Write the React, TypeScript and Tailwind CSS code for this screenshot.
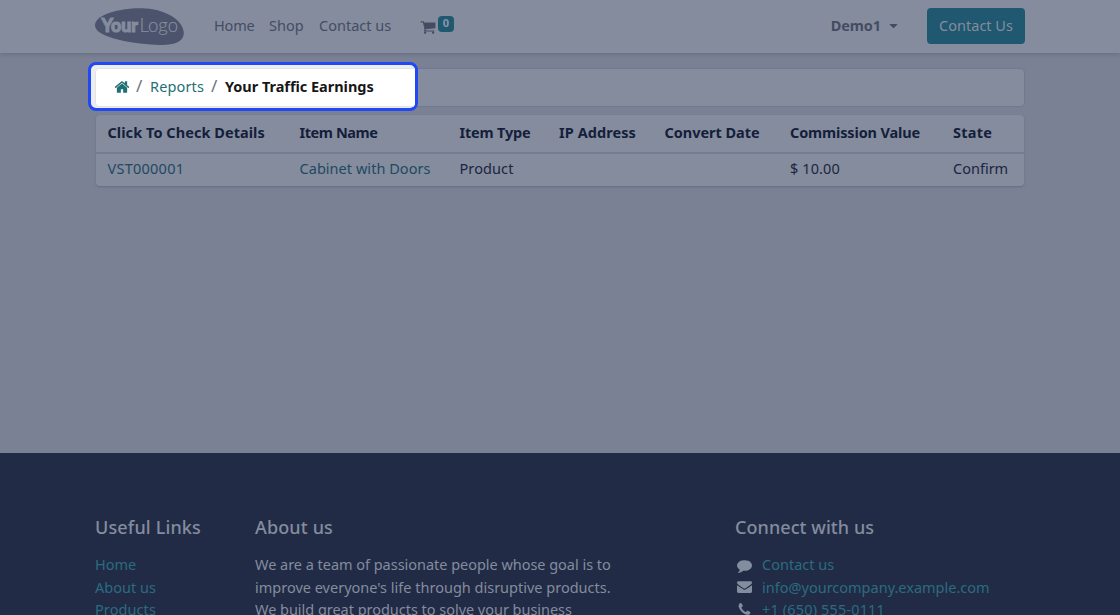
import { FaCaretDown } from 'react-icons/fa';

const ICONS = {
  home: 'M1472 992v480q0 26-19 45t-45 19h-384v-384h-256v384h-384q-26 0-45-19t-19-45v-480q0-1 .5-3t.5-3l575-474 575 474q1 2 1 6zm223-69l-62 74q-8 9-21 11h-3q-13 0-21-7l-692-577-692 577q-12 8-24 7-13-2-21-11l-62-74q-8-10-7-23.5t11-21.5l719-599q32-26 76-26t76 26l244 204v-195q0-14 9-23t23-9h192q14 0 23 9t9 23v408l219 182q10 8 11 21.5t-7 23.5z',
  cart: 'M704 1536q0 52-38 90t-90 38-90-38-38-90 38-90 90-38 90 38 38 90zm896 0q0 52-38 90t-90 38-90-38-38-90 38-90 90-38 90 38 38 90zm128-1088v512q0 24-16.5 42.5t-40.5 21.5l-1044 122q13 60 13 70 0 16-24 64h920q26 0 45 19t19 45-19 45-45 19h-1024q-26 0-45-19t-19-45q0-11 8-31.5t16-36 21.5-40 15.5-29.5l-177-823h-204q-26 0-45-19t-19-45 19-45 45-19h256q16 0 28.5 6.5t19.5 15.5 13 24.5 8 26 5.5 29.5 4.5 26h1201q26 0 45 19t19 45z',
  comment: 'M1792 896q0 174-120 321.5t-326 233-450 85.5q-70 0-145-8-198 175-460 242-49 14-114 22-17 2-30.5-9t-17.5-29v-1q-3-4-.5-12t2-10 4.5-9.5l6-9 7-8.5 8-9q7-8 31-34.5t34.5-38 31-39.5 32.5-51 27-59 26-76q-157-89-247.5-220t-90.5-281q0-130 71-248.5t191-204.5 286-136.5 348-50.5q244 0 450 85.5t326 233 120 321.5z',
  envelope: 'M1792 710v794q0 66-47 113t-113 47h-1472q-66 0-113-47t-47-113v-794q44 49 101 87 362 246 497 345 57 42 92.5 65.5t94.5 48 110 24.5h2q51 0 110-24.5t94.5-48 92.5-65.5q170-123 498-345 57-39 100-87zm0-294q0 79-49 151t-122 123q-376 261-468 325-10 7-42.5 30.5t-54 38-52 32.5-57.5 27-50 9h-2q-23 0-50-9t-57.5-27-52-32.5-54-38-42.5-30.5q-91-64-262-182.5t-205-142.5q-62-42-117-115.5t-55-136.5q0-78 41.5-130t118.5-52h1472q65 0 112.500 47t47.500 113z',
  phone: 'M1600 1240q0 27-10 70.5t-21 68.5q-21 50-122 106-94 51-186 51-27 0-53-3.5t-57.5-12.5-47-14.5-55.5-20.5-49-18q-98-35-175-83-127-79-264-216t-216-264q-48-77-83-175-3-9-18-49t-20.5-55.5-14.5-47-12.5-57.5-3.5-53q0-92 51-186 56-101 106-122 25-11 68.5-21t70.5-10q14 0 21 3 18 6 53 76 11 19 30 54t35 63.5 31 53.5q3 4 17.5 25t21.5 35.5 7 28.500q0 20-28.5 50t-62 55-62 53-28.5 46q0 9 5 22.5t8.5 20.5 14 24 11.5 19q76 137 174 235t235 174q2 1 19 11.5t24 14 20.5 8.5 22.5 5q18 0 46-28.5t53-62 55-62 50-28.5q14 0 28.5 7t35.5 21.5 25 17.5q25 15 53.5 31t63.5 35 54 30q70 35 76 53 3 7 3 21z',
};

function Icon({ name, className }: { name: keyof typeof ICONS; className: string }) {
  return (
    <svg viewBox="0 0 1792 1792" fill="currentColor" className={className}>
      <path d={ICONS[name]} />
    </svg>
  );
}

function Logo() {
  return (
    <svg className="mt-[2px] block h-[38px] w-[90px]" viewBox="0 0 90 38">
      <path d="M0 17.5C0 7 22 .3 46 .2C69 0 88.800 12 88.800 25C88.800 34 79 37.300 65 37C42 36.500 0 30 0 17.500Z" fill="#4b546c" />
      <path d="M3.500 9.300h5l2 3z" fill="#4b546c" />
      <text x="6.500" y="23.800" fontFamily="Lato, sans-serif" fontWeight="900" fontSize="18.500" textLength="36.500" lengthAdjust="spacingAndGlyphs" fill="#848c9e" stroke="#848c9e" strokeWidth="1.1">
        Your
      </text>
      <text x="44.500" y="23.800" fontFamily="Lato, sans-serif" fontWeight="300" fontSize="19" textLength="38.500" lengthAdjust="spacingAndGlyphs" fill="#848c9e" stroke="#848c9e" strokeWidth=".2">
        Logo
      </text>
    </svg>
  );
}

function Header() {
  return (
    <header className="h-[53px] bg-[#848c9e] shadow-[0_2px_4px_rgba(45,58,90,0.22)]">
      <div className="mx-auto flex h-[51px] w-[930px] items-center text-[#444c64]">
        <Logo />
        <nav className="ml-[29px] flex items-center">
          <a className="w-[55px] tracking-[-0.15px]">Home</a>
          <a className="w-[50px]">Shop</a>
          <a className="w-[101px]">Contact us</a>
          <a className="flex items-center">
            <Icon name="cart" className="mt-[2px] size-[16px]" />
            <span className="mb-[4px] ml-[2px] flex h-4 w-4 items-center justify-center rounded-[4px] bg-[#1f5870] pb-[3px] text-[11px] leading-none font-bold text-[#8d96a7]">
              0
            </span>
          </a>
        </nav>
        <a className="ml-auto flex items-center font-bold tracking-[-0.1px]">
          Demo1
          <FaCaretDown className="ml-[6px] size-[13px]" />
        </a>
        <button className="mt-[1px] ml-[27px] h-9 w-[98px] rounded-[4px] bg-[#1f5870] pb-[2px] text-[#848c9e]">Contact Us</button>
      </div>
    </header>
  );
}

function Breadcrumb() {
  return (
    <div className="absolute -top-[7px] -left-[8px] h-[49px] w-[330px] overflow-hidden rounded-[8px] border-[3px] border-[#2148f5] bg-[#ededf0] pt-[3px] pl-1">
      <div className="flex h-[39px] w-[330px] items-center rounded-l-[4px] border border-[#e2e3e6] bg-white pb-[2px] pl-[18px] text-[#6c757d]">
        <Icon name="home" className="mt-[1px] size-[16px] text-[#1f7073]" />
        <span className="ml-[6px] w-[14px] text-[17px]">/</span>
        <a className="tracking-[0.13px] text-[#1f7073]">Reports</a>
        <span className="ml-[7px] w-[14px] text-[17px]">/</span>
        <span className="font-bold tracking-[-0.03px] text-[#161616]">Your Traffic Earnings</span>
      </div>
    </div>
  );
}

function Earnings() {
  return (
    <table className="mt-[9px] w-[928px] table-fixed border-separate border-spacing-0 overflow-hidden rounded-[4px] bg-[#848c9e] text-left leading-[22.500px] text-[#1b2541] shadow-[0_1px_2px_rgba(45,58,100,0.3)]">
      <colgroup>
        <col className="w-[192px]" />
        <col className="w-[160px]" />
        <col className="w-[99.500px]" />
        <col className="w-[105.500px]" />
        <col className="w-[125.500px]" />
        <col className="w-[163px]" />
        <col className="w-[82.500px]" />
      </colgroup>
      <thead>
        <tr className="h-[39px] [&>th]:border-b-2 [&>th]:border-[#747d94] [&>th]:p-0 [&>th]:pb-[2px] [&>th]:pl-[11.500px] [&>th]:font-bold [&>th]:whitespace-nowrap [&>th]:text-[#151e3a]">
          <th className="tracking-[0.05px]">Click To Check Details</th>
          <th className="tracking-[-0.42px]">Item Name</th>
          <th className="tracking-[-0.19px]">Item Type</th>
          <th className="tracking-[0.08px]">IP Address</th>
          <th className="tracking-[-0.04px]">Convert Date</th>
          <th className="tracking-[-0.15px]">Commission Value</th>
          <th className="tracking-[0.22px]">State</th>
        </tr>
      </thead>
      <tbody>
        <tr className="h-8 [&>td]:p-0 [&>td]:pb-[3px] [&>td]:pl-[11.500px] [&>td]:whitespace-nowrap">
          <td className="tracking-[0.25px] text-[#1f4961]">VST000001</td>
          <td className="tracking-[0.04px] text-[#1f4961]">Cabinet with Doors</td>
          <td className="tracking-[0.1px]">Product</td>
          <td></td>
          <td></td>
          <td className="tracking-[0.1px]">$ 10.00</td>
          <td>Confirm</td>
        </tr>
      </tbody>
    </table>
  );
}

function Footer() {
  return (
    <footer className="h-[162px] overflow-hidden bg-[#212b45] pt-[62px] leading-[22.500px] text-[#848c9f]">
      <div className="mx-auto flex w-[930px] [&_h5]:mb-[14px] [&_h5]:text-[18px] [&_h5]:leading-[24px] [&_h5]:font-medium">
        <div className="w-[160px]">
          <h5 className="tracking-[0.15px]">Useful Links</h5>
          <ul className="text-[#2b6b80]">
            <li>Home</li>
            <li>About us</li>
            <li className="tracking-[0.09px]">Products</li>
          </ul>
        </div>
        <div className="w-[480px]">
          <h5 className="tracking-[0.14px]">About us</h5>
          <p className="whitespace-nowrap">
            <span className="tracking-[-0.03px]">We are a team of passionate people whose goal is to</span>
            <br />
            improve everyone's life through disruptive products.
            <br />
            <span className="tracking-[-0.03px]">We build great products to solve your business</span>
          </p>
        </div>
        <div className="w-[290px]">
          <h5 className="tracking-[0.07px]">Connect with us</h5>
          <ul className="[&_a]:text-[#2b6b80] [&>li]:flex [&>li]:items-center [&>li]:gap-[10px] [&>li]:pl-[2px]">
            <li>
              <Icon name="comment" className="mt-[2px] size-[15px]" />
              <a>Contact us</a>
            </li>
            <li>
              <Icon name="envelope" className="size-[15px]" />
              <a>info@yourcompany.example.com</a>
            </li>
            <li>
              <Icon name="phone" className="size-[15px]" />
              <a className="tracking-[0.15px]">+1 (650) 555-0111</a>
            </li>
          </ul>
        </div>
      </div>
    </footer>
  );
}

export default function App() {
  return (
    <div className="flex h-[615px] flex-col overflow-hidden bg-[#7b8194] font-['Noto_Sans',sans-serif] text-[14.500px] leading-[22.500px]">
      <Header />
      <main className="mx-auto w-[928px] flex-1 pt-4">
        <div className="relative h-[37px] w-[928px] rounded-[4px] bg-[#848c9e] shadow-[0_0_1px_1px_rgba(90,102,140,0.3)]">
          <Breadcrumb />
        </div>
        <Earnings />
      </main>
      <Footer />
    </div>
  );
}
